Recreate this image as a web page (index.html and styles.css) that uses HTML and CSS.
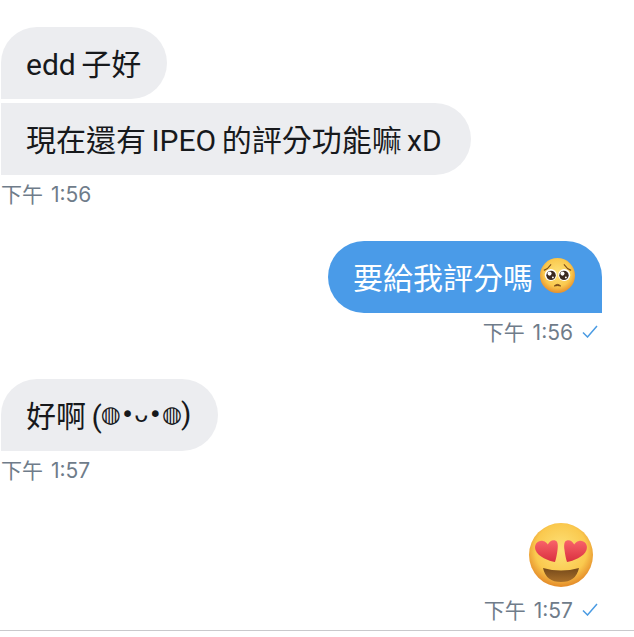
FILE: index.html
```html
<!DOCTYPE html>
<html lang="zh-Hant">
<head>
	<meta charset="UTF-8">
	<meta name="viewport" content="width=device-width, initial-scale=1.0">
	<title>Chat</title>
	<link rel="stylesheet" href="styles.css">
</head>
<body>
	<div class="chat">
		<!--Incoming group-->
		<div class="group in">
			<div class="bubble first">edd 子好</div>
			<div class="bubble middle">現在還有 IPEO 的評分功能嘛 xD</div>
			<div class="time">下午 1:56</div>
		</div>

		<!--Outgoing group-->
		<div class="group out">
			<div class="bubble own">要給我評分嗎<svg class="pleading" viewBox="0 0 26 26" aria-hidden="true">
				<defs>
					<radialGradient id="skinSmall" cx="50%" cy="42%" r="56%">
						<stop offset="0" stop-color="#fde27a"/>
						<stop offset=".7" stop-color="#fac94e"/>
						<stop offset="1" stop-color="#e9952f"/>
					</radialGradient>
				</defs>
				<circle cx="13" cy="13" r="13" fill="url(#skinSmall)"/>
				<path d="M3.2 9 Q6 8 8 5 M22.8 9 Q20 8 18 5" fill="none" stroke="#7a4a18" stroke-width=".9" stroke-linecap="round"/>
				<circle cx="8" cy="12.6" r="4.5" fill="#fff"/>
				<circle cx="18" cy="12.6" r="4.5" fill="#fff"/>
				<circle cx="8.2" cy="12.9" r="3.5" fill="#3a2a20"/>
				<circle cx="17.8" cy="12.9" r="3.5" fill="#3a2a20"/>
				<circle cx="7.1" cy="11.6" r="1.5" fill="#fff"/>
				<circle cx="16.7" cy="11.6" r="1.5" fill="#fff"/>
				<circle cx="9.6" cy="14.4" r=".7" fill="#fff"/>
				<circle cx="19.2" cy="14.4" r=".7" fill="#fff"/>
				<path d="M10.6 20.8 Q13 18.4 15.4 20.8 Q13 20.2 10.6 20.8Z" fill="#6b3d14" stroke="#6b3d14" stroke-width=".6"/>
			</svg></div>
			<div class="time">下午 1:56<svg class="tick" viewBox="0 0 16 13" aria-hidden="true"><path d="M1 7.5 L5.5 12 L15 1" fill="none" stroke="#4a9be3" stroke-width="1.5"/></svg></div>
		</div>

		<!--Incoming reply-->
		<div class="group in">
			<div class="bubble first">好啊 (<span class="kaomoji">◍•ᴗ•◍</span>)</div>
			<div class="time">下午 1:57</div>
		</div>

		<!--Outgoing big emoji-->
		<div class="group out sticker">
			<svg class="heart-eyes" viewBox="0 0 64 64" aria-hidden="true">
				<defs>
					<radialGradient id="skinBig" cx="50%" cy="42%" r="56%">
						<stop offset="0" stop-color="#fde27a"/>
						<stop offset=".72" stop-color="#fac94e"/>
						<stop offset="1" stop-color="#e6902c"/>
					</radialGradient>
					<linearGradient id="heart" x1="0" y1="0" x2="0" y2="1">
						<stop offset="0" stop-color="#f9646a"/>
						<stop offset="1" stop-color="#d9303f"/>
					</linearGradient>
					<linearGradient id="mouth" x1="0" y1="0" x2="0" y2="1">
						<stop offset="0" stop-color="#75491a"/>
						<stop offset="1" stop-color="#a86f2a"/>
					</linearGradient>
				</defs>
				<circle cx="32" cy="32" r="32" fill="url(#skinBig)"/>
				<path d="M26 39 C20 38 9 34 6.5 27 C4.5 21 9.5 17 14 18 C16.5 18.6 18 20 18.8 21.5 C20 19 22.5 16.8 25.5 17.2 C29 17.8 29.2 22 28.5 27 C28 31 27 36 26 39Z" fill="url(#heart)"/>
				<path d="M38 39 C44 38 55 34 57.5 27 C59.5 21 54.5 17 50 18 C47.5 18.6 46 20 45.2 21.5 C44 19 41.5 16.8 38.5 17.2 C35 17.8 34.8 22 35.5 27 C36 31 37 36 38 39Z" fill="url(#heart)"/>
				<path d="M14 45 Q32 50 50 45 Q47 59 32 59 Q17 59 14 45Z" fill="url(#mouth)"/>
			</svg>
			<div class="time">下午 1:57<svg class="tick" viewBox="0 0 16 13" aria-hidden="true"><path d="M1 7.5 L5.5 12 L15 1" fill="none" stroke="#4a9be3" stroke-width="1.5"/></svg></div>
		</div>
	</div>
	<div class="rule"></div>
</body>
</html>
```

FILE: styles.css
```css
* {
	box-sizing: border-box;
}

body {
	margin: 0;
	background: #fff;
	color: #17191c;
	font-family: Roboto, "Noto Sans CJK TC", sans-serif;
}

.chat {
	display: flex;
	flex-direction: column;
	gap: 36px;
	padding: 27px 32px 0 1px;
}

/* Each group hugs its own side */
.group {
	display: flex;
	flex-direction: column;
}
.in {
	align-items: flex-start;
	gap: 4px;
}
.out {
	align-items: flex-end;
}

.bubble {
	display: flex;
	align-items: center;
	height: 72px;
	padding: 0 26px 3px 25px;
	border-radius: 36px;
	background: #ecedf0;
	font-size: 30px;
	word-spacing: -2px;
	white-space: pre;
}
.first {
	border-bottom-left-radius: 0;
}
.middle {
	padding-right: 29px;
	border-top-left-radius: 0;
	border-bottom-left-radius: 0;
}
.own {
	padding: 0 27px 3px 25px;
	background: #4a9be8;
	color: #fff;
	border-bottom-right-radius: 0;
}

.pleading {
	width: 35px;
	height: 35px;
	margin-left: 7px;
}

.kaomoji {
	margin: 0 -1px;
	font-family: "DejaVu Sans", sans-serif;
	font-size: 23px;
}

.time {
	display: flex;
	align-items: center;
	height: 24px;
	margin-top: 6px;
	color: #6f7c8a;
	font-family: Inter, "Noto Sans CJK TC", sans-serif;
	font-size: 21px;
	word-spacing: 2px;
	white-space: pre;
}
.in .time {
	margin-top: 2px;
}
.out .time {
	padding-right: 4px;
}

.tick {
	width: 16px;
	height: 13px;
	margin-left: 9px;
}

.sticker {
	margin-top: 6px;
}
.sticker .time {
	margin-top: 10px;
}
.heart-eyes {
	width: 64px;
	height: 64px;
	margin-right: 9px;
}

.rule {
	height: 1px;
	margin-top: 9px;
	background: #c9c9cc;
}
```
